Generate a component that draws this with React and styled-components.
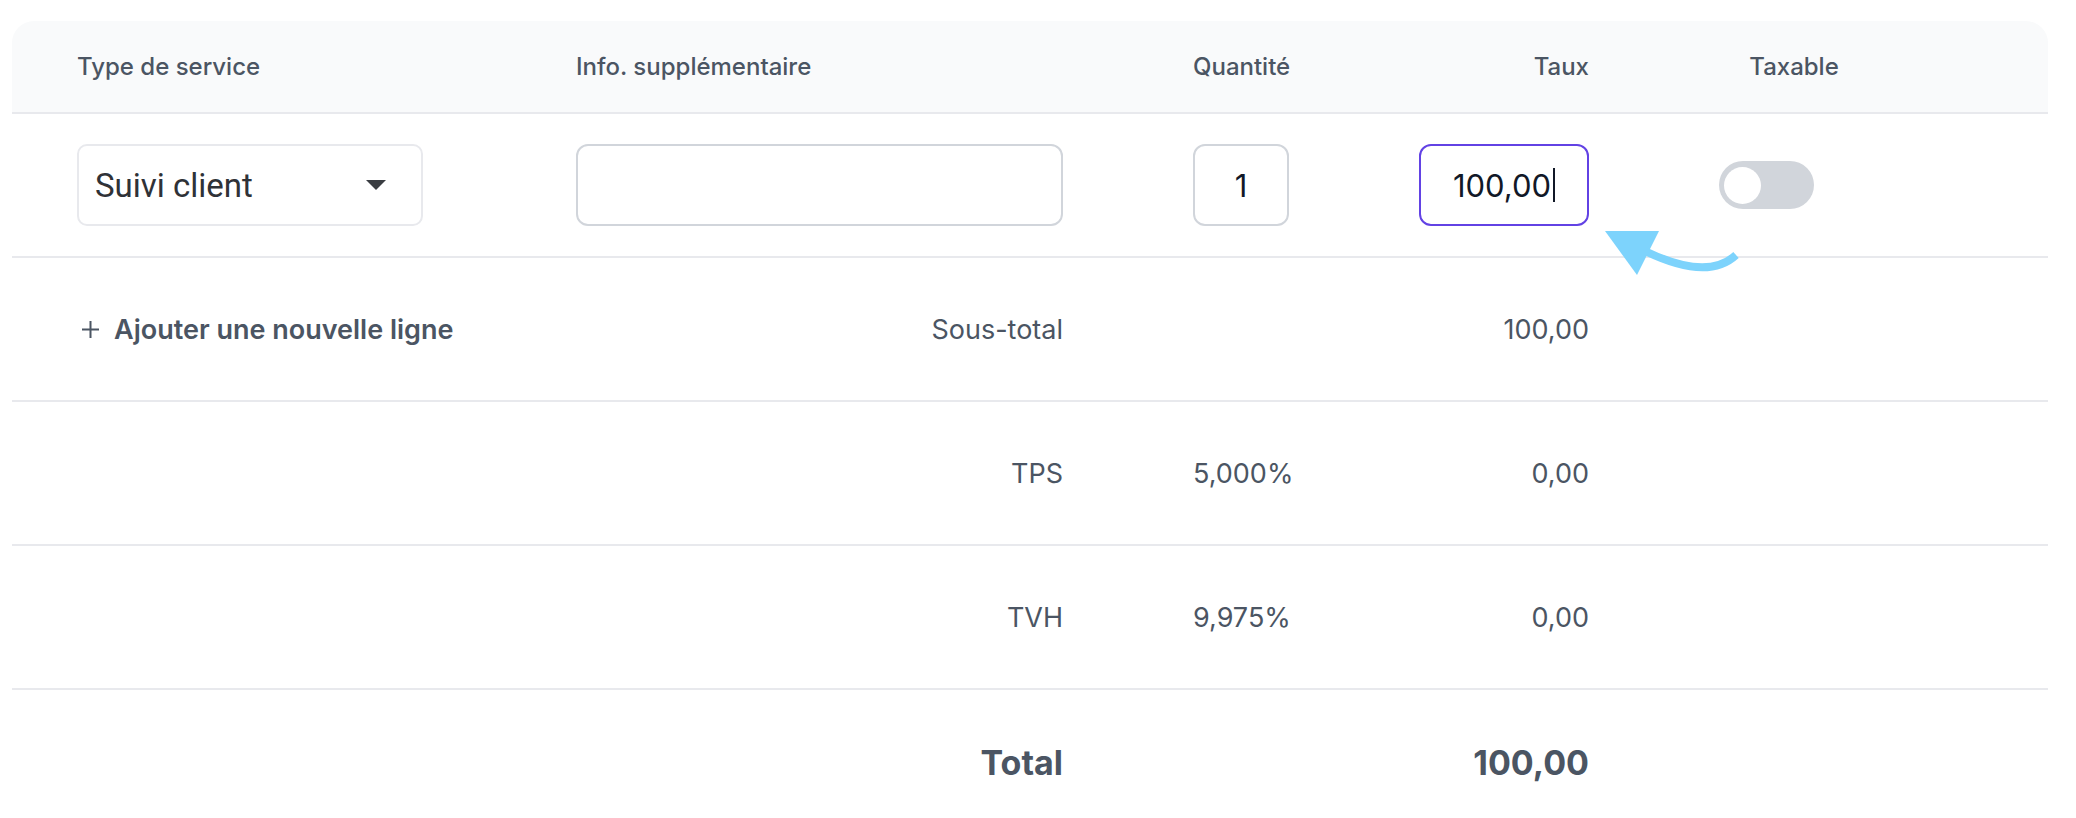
import React from 'react';
import styled, { createGlobalStyle } from 'styled-components';

const GlobalStyle = createGlobalStyle`
  body {
    margin: 0;
    background: #ffffff;
    font-family: Inter, "Noto Sans", sans-serif;
    color: #4b5563;
  }
`;

const Card = styled.div`
  position: relative;
  width: 2036px;
  margin: 21px 0 0 12px;
  border-radius: 22px 22px 0 0;
  overflow: hidden;
`;

const Row = styled.div`
  display: grid;
  grid-template-columns: 369px 487px 96px 170px 150px;
  column-gap: 130px;
  align-items: center;
  box-sizing: border-box;
  height: ${(p) => p.$height || 144}px;
  padding-left: 65px;
  background: ${(p) => (p.$head ? '#f9fafb' : '#ffffff')};
  border-bottom: ${(p) => (p.$last ? 'none' : '2px solid #e8e9ed')};
`;

const HeadCell = styled.div`
  font-size: 24px;
  font-weight: 500;
  color: #4b5563;
  text-align: ${(p) => p.$align || 'left'};
`;

const Cell = styled.div`
  font-size: ${(p) => (p.$strong ? 34 : 27)}px;
  font-weight: ${(p) => (p.$strong ? 700 : 400)};
  color: #4b5563;
  text-align: ${(p) => p.$align || 'left'};
`;

const SelectBox = styled.div`
  box-sizing: border-box;
  width: 346px;
  height: 82px;
  display: flex;
  align-items: center;
  justify-content: space-between;
  padding: 0 35px 0 16px;
  border: 2px solid #e8e9ed;
  border-radius: 10px;
  font-family: Roboto, "Liberation Sans", sans-serif;
  font-size: 33px;
  color: #2f3237;
`;

const Caret = styled.span`
  width: 0;
  height: 0;
  border-left: 10px solid transparent;
  border-right: 10px solid transparent;
  border-top: 10px solid #3a3d42;
`;

const Field = styled.div`
  box-sizing: border-box;
  width: ${(p) => p.$width}px;
  height: 82px;
  display: flex;
  align-items: center;
  justify-content: center;
  border: 2px solid ${(p) => (p.$focused ? '#6242e4' : '#d1d5db')};
  border-radius: 12px;
  font-size: 31px;
  color: #111827;
  background: #ffffff;
`;

const TextCursor = styled.span`
  display: inline-block;
  width: 2px;
  height: 34px;
  margin-left: 2px;
  background: #111827;
`;

const Toggle = styled.div`
  box-sizing: border-box;
  width: 95px;
  height: 48px;
  padding: 0 5px;
  display: flex;
  align-items: center;
  border-radius: 24px;
  background: #d1d5db;
`;

const Knob = styled.span`
  width: 37px;
  height: 37px;
  border-radius: 50%;
  background: #ffffff;
`;

const AddLine = styled.div`
  display: flex;
  align-items: center;
  gap: 14px;
  padding-left: 4px;
  font-size: 27px;
  font-weight: 600;
  color: #4b5563;
  white-space: nowrap;
`;

const Plus = styled.svg`
  flex-shrink: 0;
  width: 19px;
  height: 19px;
`;

const Pointer = styled.svg`
  position: absolute;
  left: 1588px;
  top: 204px;
  width: 150px;
  height: 60px;
`;

const App = () => (
  <>
    <GlobalStyle />
    <Card>
      <Row $head $height={93}>
        <HeadCell>Type de service</HeadCell>
        <HeadCell>Info. supplémentaire</HeadCell>
        <HeadCell $align="right">Quantité</HeadCell>
        <HeadCell $align="right">Taux</HeadCell>
        <HeadCell $align="center">Taxable</HeadCell>
      </Row>

      <Row>
        <SelectBox>
          Suivi client
          <Caret />
        </SelectBox>
        <Field $width={487} />
        <Field $width={96}>1</Field>
        <Field $width={170} $focused>
          100,00
          <TextCursor />
        </Field>
        <Toggle>
          <Knob />
        </Toggle>
      </Row>

      <Row>
        <AddLine>
          <Plus viewBox="0 0 19 19">
            <path d="M9.5 1v17M1 9.5h17" stroke="#4b5563" strokeWidth="2" fill="none" />
          </Plus>
          Ajouter une nouvelle ligne
        </AddLine>
        <Cell $align="right">Sous-total</Cell>
        <Cell />
        <Cell $align="right">100,00</Cell>
      </Row>

      <Row>
        <Cell />
        <Cell $align="right">TPS</Cell>
        <Cell $align="right">5,000%</Cell>
        <Cell $align="right">0,00</Cell>
      </Row>

      <Row>
        <Cell />
        <Cell $align="right">TVH</Cell>
        <Cell $align="right">9,975%</Cell>
        <Cell $align="right">0,00</Cell>
      </Row>

      <Row $last>
        <Cell />
        <Cell $align="right" $strong>Total</Cell>
        <Cell />
        <Cell $align="right" $strong>100,00</Cell>
      </Row>

      <Pointer viewBox="0 0 150 60">
        <path d="M47 27 Q108 56 136 30" stroke="#7dd3fc" strokeWidth="8" fill="none" />
        <polygon points="5,6 59,6 37,50" fill="#7dd3fc" />
      </Pointer>
    </Card>
  </>
);

export default App;
